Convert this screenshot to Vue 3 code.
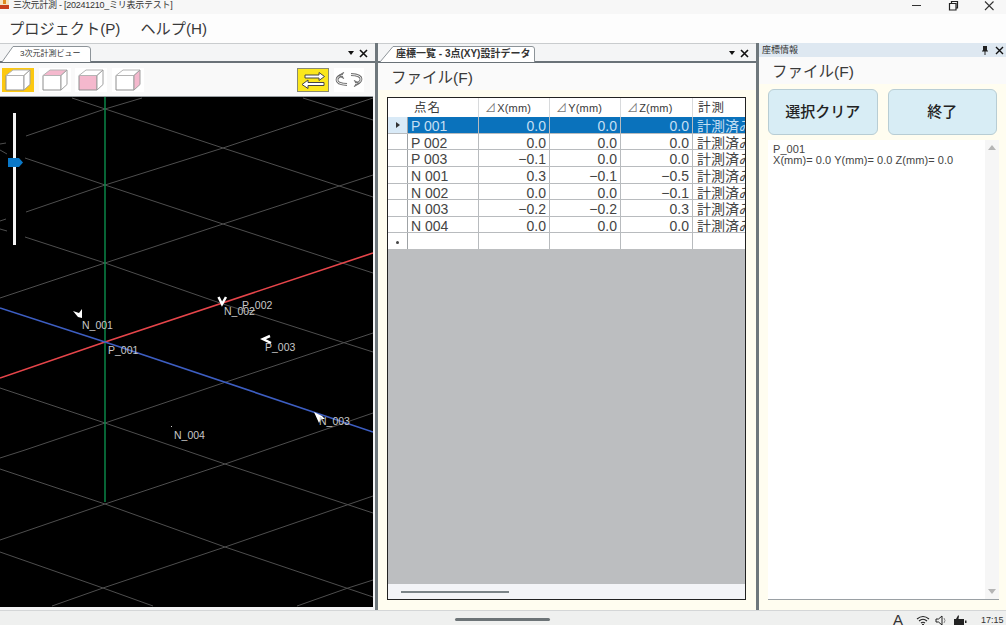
<script setup>
const rows = [
  { name: "P 001", x: "0.0", y: "0.0", z: "0.0", selected: true },
  { name: "P 002", x: "0.0", y: "0.0", z: "0.0" },
  { name: "P 003", x: "−0.1", y: "0.0", z: "0.0" },
  { name: "N 001", x: "0.3", y: "−0.1", z: "−0.5" },
  { name: "N 002", x: "0.0", y: "0.0", z: "−0.1" },
  { name: "N 003", x: "−0.2", y: "−0.2", z: "0.3" },
  { name: "N 004", x: "0.0", y: "0.0", z: "0.0" },
];

// grid lines of the 3D view, in canvas coordinates (top of canvas = 0)
const gridLines = [
  "72,1 223,51 373,100",
  "303,1 373,23",
  "0,53 7,57",
  "25,61 105,88 223,127 373,176",
  "0,132 7,134",
  "25,140 105,166 220,206 373,255",
  "0,291 105,326 225,367 373,416",
  "0,372 105,407 225,450 373,500",
  "0,455 103,491 153,509",
  "142,1 105,12 26,39",
  "0,47 6,46",
  "373,1 223,51 105,88 26,115",
  "0,124 6,122",
  "373,78 223,127 105,166 0,201",
  "373,236 223,286 105,326 25,353 0,361",
  "373,316 225,367 105,407 0,443",
  "373,399 225,450 103,491 52,509",
  "373,483 348,491 297,509",
];

const labels = [
  { text: "N_001", x: 82, y: 232 },
  { text: "P_002", x: 242, y: 212 },
  { text: "N_002", x: 224, y: 218 },
  { text: "P_001", x: 108, y: 257 },
  { text: "P_003", x: 265, y: 254 },
  { text: "N_003", x: 319, y: 328 },
  { text: "N_004", x: 174, y: 342 },
];

const cubes = ["active", "top", "front", "side"];
</script>

<template>
  <div class="app">
    <div class="titlebar">
      <svg class="app-icon" width="9" height="9" viewBox="0 0 9 9">
        <rect width="9" height="9" fill="#f4e3c4" />
        <rect y="5" width="9" height="4" fill="#c8401c" />
        <rect x="3" y="0" width="3" height="4" fill="#e08a1e" />
      </svg>
      <span class="title">三次元計測 - [20241210_ミリ表示テスト]</span>
      <div class="win-btns">
        <svg width="12" height="12" viewBox="0 0 12 12"><path d="M1 5.500H10" stroke="#333" fill="none" /></svg>
        <svg width="12" height="12" viewBox="0 0 12 12"><path d="M2.500 3.500H9V10H2.500ZM4.500 3V1.500H10.500V8H9.500" stroke="#222" fill="none" stroke-width="1.2" /></svg>
        <svg width="12" height="12" viewBox="0 0 12 12"><path d="M2 1.500L10.500 10M10.500 1.500L2 10" stroke="#333" fill="none" stroke-width="1.1" /></svg>
      </div>
    </div>
    <div class="menubar">
      <span>プロジェクト(P)</span>
      <span>ヘルプ(H)</span>
    </div>

    <div class="main">
      <section class="panel view-panel">
        <div class="tabstrip">
          <div class="tab">
            <svg class="tab-shape" viewBox="0 0 90 16" preserveAspectRatio="none">
              <path d="M0 16L11 .5H85Q88.500 .5 88.500 3V16" fill="#fff" stroke="#8d9499" />
            </svg>
            <span class="tab-text small">3次元計測ビュー</span>
          </div>
          <span class="tab-ctrl">
            <i class="caret"></i>
            <svg width="9" height="9" viewBox="0 0 9 9"><path d="M1 1L8 8M8 1L1 8" stroke="#111" stroke-width="1.6" /></svg>
          </span>
        </div>
        <div class="toolbar">
          <button v-for="c in cubes" :key="c" class="tool" :class="{ on: c === 'active' }">
            <svg width="32" height="24" viewBox="0 0 32 24">
              <path d="M4 7.500H22V22H4Z" :fill="c === 'front' ? '#f4b8cd' : '#fff'" stroke="#8e8e8e" />
              <path d="M4 7.500L11 2H28L22 7.500Z" :fill="c === 'top' ? '#f4b8cd' : '#fff'" stroke="#b4b4b4" />
              <path d="M22 7.500L28 2V16.500L22 22Z" :fill="c === 'side' ? '#f4b8cd' : '#fff'" stroke="#a0a0a0" />
            </svg>
          </button>
          <div class="spacer"></div>
          <button class="tool swap">
            <svg width="26" height="20" viewBox="0 0 26 20">
              <path d="M5 5H19V2.500L24.500 6.500L19 10.500V8H5Z" fill="#fff" stroke="#444" />
              <path d="M24 12.500H8V10L2 14.500L8 18.500V15.500H24Z" fill="#fff" stroke="#444" />
            </svg>
          </button>
          <button class="tool rotate">
            <svg width="28" height="15" viewBox="0 0 28 15">
              <g fill="none" stroke="#6f6f6f" stroke-width="2.800">
                <path d="M12 12.500Q2 12 2 8Q2 4 8 3.500" />
                <path d="M16 2.500Q26 3 26 7Q26 11 20 11.500" />
              </g>
              <g fill="none" stroke="#fff" stroke-width="0.900">
                <path d="M12 12.500Q2 12 2 8Q2 4 8 3.500" />
                <path d="M16 2.500Q26 3 26 7Q26 11 20 11.500" />
              </g>
              <path d="M9 .5L4 3.500L9 6.500M19 8.500L24 11.500L19 14.500" fill="none" stroke="#6f6f6f" stroke-width="1.200" />
            </svg>
          </button>
        </div>
        <div class="canvas">
          <svg class="scene" viewBox="0 0 373 510" width="373" height="510">
            <polyline v-for="(l, i) in gridLines" :key="i" :points="l" fill="none" stroke="#4e4e4e" stroke-width="1" />
            <path d="M105 0V405" stroke="#0b8f4d" stroke-width="1.400" fill="none" />
            <path d="M0 281L105 245L373 156" stroke="#e6454a" stroke-width="1.600" fill="none" />
            <path d="M0 211L105 245L373 335" stroke="#3d5ec2" stroke-width="1.600" fill="none" />
            <path d="M73 214L79 216L82 212L82 221L78 220Z" fill="#fff" />
            <path d="M218.500 200L222 207L226 200" fill="none" stroke="#fff" stroke-width="2.500" />
            <path d="M270 239L263 242L271 246" fill="none" stroke="#fff" stroke-width="2.500" />
            <path d="M314 315L322 319L325 322L321 322L319 326Z" fill="#fff" />
            <rect x="171" y="329" width="1" height="1" fill="#ccc" />
            <text v-for="t in labels" :key="t.text" :x="t.x" :y="t.y" class="pt-label">{{ t.text }}</text>
          </svg>
          <div class="slider">
            <div class="slider-bar"></div>
            <svg class="slider-thumb" width="15" height="9" viewBox="0 0 15 9">
              <path d="M0 0H11L15 4.500L11 9H0Z" fill="#0a78c8" />
            </svg>
          </div>
        </div>
      </section>

      <section class="panel list-panel">
        <div class="tabstrip">
          <div class="tab wide">
            <svg class="tab-shape" viewBox="0 0 155 16" preserveAspectRatio="none">
              <path d="M0 16L13 .5H152Q154.500 .5 154.500 3V16" fill="#fff" stroke="#8d9499" />
            </svg>
            <span class="tab-text bold">座標一覧 - 3点(XY)設計データ</span>
          </div>
          <span class="tab-ctrl">
            <i class="caret"></i>
            <svg width="9" height="9" viewBox="0 0 9 9"><path d="M1 1L8 8M8 1L1 8" stroke="#111" stroke-width="1.6" /></svg>
          </span>
        </div>
        <div class="filemenu">ファイル(F)</div>
        <div class="list-body">
          <div class="table">
            <div class="tr head">
              <div class="rh"></div>
              <div class="th jp">点名</div>
              <div class="th"><i class="delta">⊿</i>X(mm)</div>
              <div class="th"><i class="delta">⊿</i>Y(mm)</div>
              <div class="th"><i class="delta">⊿</i>Z(mm)</div>
              <div class="th jp last">計測</div>
            </div>
            <div v-for="r in rows" :key="r.name" class="tr" :class="{ sel: r.selected }">
              <div class="rh"><i v-if="r.selected" class="arrow"></i></div>
              <div class="td">{{ r.name }}</div>
              <div class="td num">{{ r.x }}</div>
              <div class="td num">{{ r.y }}</div>
              <div class="td num">{{ r.z }}</div>
              <div class="td clip">計測済み</div>
            </div>
            <div class="tr newrow">
              <div class="rh"><i class="star"></i></div>
              <div class="td"></div>
              <div class="td"></div>
              <div class="td"></div>
              <div class="td"></div>
              <div class="td"></div>
            </div>
            <div class="empty"></div>
            <div class="hscroll"><i></i></div>
          </div>
        </div>
      </section>

      <section class="panel info-panel">
        <div class="info-head">
          <span>座標情報</span>
          <span class="info-ctrl">
            <svg width="8" height="10" viewBox="0 0 8 10"><path d="M2 1H6V5.500H7V6.500H4.500V10H3.500V6.500H1V5.500H2Z" fill="#222" /></svg>
            <svg width="9" height="9" viewBox="0 0 9 9"><path d="M1 1L8 8M8 1L1 8" stroke="#111" stroke-width="1.4" /></svg>
          </span>
        </div>
        <div class="filemenu info-file">ファイル(F)</div>
        <div class="info-body">
          <div class="btns">
            <button class="big">選択クリア</button>
            <button class="big">終了</button>
          </div>
          <div class="memo">
            <div class="memo-text">P_001<br />X(mm)= 0.0 Y(mm)= 0.0 Z(mm)= 0.0</div>
            <div class="memo-scroll">
              <i class="up"></i>
              <i class="down"></i>
            </div>
          </div>
        </div>
      </section>
    </div>

    <div class="taskbar">
      <div class="home"></div>
      <div class="tray">
        <span class="ime">A</span>
        <svg width="14" height="11" viewBox="0 0 14 11">
          <path d="M1 4Q7 -1 13 4M3 6Q7 2.500 11 6M5 8Q7 6.500 9 8" fill="none" stroke="#222" stroke-width="1.100" />
          <circle cx="7" cy="9.800" r="1" fill="#222" />
        </svg>
        <svg width="13" height="11" viewBox="0 0 13 11">
          <path d="M1 4H3.500L7 1V10L3.500 7H1Z" fill="none" stroke="#222" />
          <path d="M9 3Q11 5.500 9 8" fill="none" stroke="#888" />
        </svg>
        <svg width="14" height="11" viewBox="0 0 14 11">
          <path d="M1 4H11V10H1Z" fill="#222" />
          <path d="M12 5.500H13.500V8H12Z" fill="#222" />
          <path d="M3 4L5 0.500H6L5.500 4Z" fill="#222" />
        </svg>
        <span class="clock">17:15</span>
      </div>
    </div>
  </div>
</template>

<style>
html,
body {
  margin: 0;
  overflow: hidden;
}
</style>

<style scoped>
.app {
  width: 1006px;
  height: 625px;
  display: flex;
  flex-direction: column;
  font-family: "Liberation Sans", "Noto Sans CJK JP", sans-serif;
  color: #333;
  background: #f0f0f0;
  overflow: hidden;
}
.titlebar {
  height: 14px;
  background: #f7f7f7;
  display: flex;
  align-items: flex-start;
  flex: none;
}
.app-icon {
  margin-top: 0;
}
.title {
  margin-left: 4px;
  font-size: 9px;
  line-height: 11px;
  letter-spacing: -0.25px;
  color: #333;
}
.win-btns {
  margin-left: auto;
  display: flex;
  gap: 24px;
  padding-right: 11px;
}
.menubar {
  height: 29px;
  background: #fdfdfd;
  flex: none;
  display: flex;
  align-items: center;
  gap: 20px;
  padding: 0 0 3px 9px;
  box-sizing: border-box;
  font-size: 15.200px;
  color: #3a3a3a;
}
.main {
  height: 567px;
  flex: none;
  display: flex;
  background: #6e777c;
}
.panel {
  display: flex;
  flex-direction: column;
}
.view-panel {
  width: 375px;
  background: #f4f5f6;
}
.list-panel {
  width: 378px;
  margin-left: 3px;
  background: #fdfdfd;
}
.info-panel {
  width: 247px;
  margin-left: 3px;
  background: #fdfdfd;
}
.tabstrip {
  height: 20px;
  flex: none;
  display: flex;
  align-items: flex-end;
  justify-content: space-between;
  background: #f4f5f6;
  border-top: 1px solid #c9ccce;
  border-bottom: 2px solid #6a7278;
  box-sizing: border-box;
  padding-left: 2px;
}
.tab {
  position: relative;
  width: 90px;
  height: 16px;
  margin-bottom: -1px;
}
.tab.wide {
  width: 155px;
}
.tab-shape {
  position: absolute;
  inset: 0;
  width: 100%;
  height: 100%;
}
.tab-text {
  position: relative;
  display: block;
  font-size: 8px;
  line-height: 15px;
  padding-left: 18px;
  white-space: nowrap;
}
.tab-text.bold {
  font-weight: 700;
  padding-left: 16px;
  font-size: 10px;
}
.tab-ctrl {
  display: flex;
  align-items: center;
  gap: 5px;
  height: 16px;
  padding-right: 7px;
}
.caret {
  width: 0;
  height: 0;
  border-left: 3.500px solid transparent;
  border-right: 3.500px solid transparent;
  border-top: 4px solid #111;
}
.toolbar {
  height: 33px;
  flex: none;
  display: flex;
  align-items: center;
  gap: 4.500px;
  padding: 0 11px 0 2px;
  box-sizing: border-box;
  background: #f9f9f9;
}
.tool {
  width: 32px;
  height: 24px;
  padding: 0;
  border: 0;
  background: #fff;
  display: flex;
  align-items: center;
  justify-content: center;
}
.tool.on {
  background: #fcc810;
}
.spacer {
  flex: 1;
}
.tool.swap {
  background: #fbe71c;
  border: 1px solid #8a8a70;
  box-sizing: border-box;
  margin-right: 1px;
}
.tool.rotate {
  width: 30px;
}
.canvas {
  position: relative;
  flex: none;
  width: 373px;
  height: 510px;
  background: #000;
  border-top: 1px solid #9aa0a4;
}
.scene {
  display: block;
}
.pt-label {
  font: 10.500px "Liberation Sans", sans-serif;
  fill: #c8c8c8;
}
.slider {
  position: absolute;
  left: 8px;
  top: 16px;
  width: 15px;
  height: 132px;
}
.slider-bar {
  position: absolute;
  left: 5px;
  top: 0;
  width: 3px;
  height: 100%;
  background: #f4f4f4;
}
.slider-thumb {
  position: absolute;
  left: 0;
  top: 45px;
}
.filemenu {
  height: 27px;
  flex: none;
  display: flex;
  align-items: center;
  padding: 0 0 2px 13px;
  font-size: 15.500px;
  color: #3a3a3a;
  background: #fafafa;
  box-sizing: border-box;
}
.list-body {
  flex: 1;
  background: #fffdf0;
  padding: 7px 10px 10px 9px;
  display: flex;
  min-height: 0;
}
.table {
  flex: 1;
  border: 1px solid #222;
  display: flex;
  flex-direction: column;
  background: #fff;
  min-width: 0;
}
.tr {
  display: grid;
  grid-template-columns: 20px 71px 71px 71px 72px 52px;
  height: 16.650px;
  flex: none;
  box-sizing: border-box;
  border-bottom: 1px solid #b8bbbe;
  font-size: 14px;
  line-height: 18.500px;
  color: #444;
}
.tr.head {
  height: 19px;
  font-size: 11px;
  line-height: 20px;
  border-bottom: 0;
}
.tr.sel .td {
  background: #0a72bc;
  color: #c4dff3;
}
.rh {
  background: #fff;
  display: flex;
  align-items: center;
  justify-content: center;
  border-right: 1px solid #9fa3a6;
}
.tr.sel .rh {
  background: #d9eaf7;
}
.head .rh {
  border-right: 0;
}
.star {
  width: 3px;
  height: 3px;
  margin-top: 3px;
  border-radius: 50%;
  background: #444;
}
.arrow {
  width: 0;
  height: 0;
  border-top: 3px solid transparent;
  border-bottom: 3px solid transparent;
  border-left: 4px solid #333;
}
.th {
  padding-left: 6px;
  border-right: 1px solid #d8dadc;
  white-space: nowrap;
  color: #3a3a3a;
  letter-spacing: 0.2px;
}
.th.jp {
  font-size: 12.500px;
  letter-spacing: 1px;
}
.th.last {
  padding-left: 5px;
  border-right: 0;
}
.delta {
  font-style: normal;
  color: #777;
  margin-right: 1px;
}
.td {
  padding: 0 3px;
  border-right: 1px solid #b8bbbe;
  white-space: nowrap;
  overflow: hidden;
}
.td:last-child {
  border-right: 0;
}
.num {
  text-align: right;
}
.clip {
  padding-left: 4px;
}
.tr.newrow {
  height: 16px;
  border-bottom: 0;
}
.empty {
  flex: 1;
  background: #bcbec0;
}
.hscroll {
  height: 15px;
  flex: none;
  background: #f3f4f7;
  position: relative;
}
.hscroll i {
  position: absolute;
  left: 13px;
  top: 7px;
  width: 108px;
  height: 2px;
  background: #7b8488;
}
.info-head {
  height: 14px;
  flex: none;
  background: #dee8f1;
  font-size: 9px;
  line-height: 15px;
  display: flex;
  justify-content: space-between;
  padding: 0 2px 0 3px;
}
.info-ctrl {
  display: flex;
  align-items: center;
  gap: 6px;
}
.info-body {
  flex: 1;
  background: #fffdf0;
  padding: 5px 7px 10px 9px;
  display: flex;
  flex-direction: column;
  gap: 5px;
  min-height: 0;
}
.btns {
  display: flex;
  gap: 10px;
  padding-right: 2px;
}
.big {
  flex: 1;
  height: 46px;
  border: 1px solid #b8cdd4;
  border-radius: 6px;
  background: #d8edf5;
  font-family: "Liberation Sans", "Noto Sans CJK JP", sans-serif;
  font-size: 15px;
  font-weight: 500;
  color: #222;
  padding: 0 0 4px;
}
.memo {
  flex: 1;
  display: flex;
  background: #fff;
  border-bottom: 1px solid #9aa0a4;
  min-height: 0;
}
.memo-text {
  flex: 1;
  font-size: 11px;
  line-height: 11px;
  padding: 4px 5px;
  letter-spacing: 0.05px;
  color: #444;
}
.memo-scroll {
  width: 14px;
  background: #f6f6f6;
  display: flex;
  flex-direction: column;
  justify-content: space-between;
  align-items: center;
  padding: 5px 0;
}
.up,
.down {
  width: 0;
  height: 0;
  border-left: 4px solid transparent;
  border-right: 4px solid transparent;
}
.up {
  border-bottom: 5px solid #b5b5b5;
}
.down {
  border-top: 5px solid #b5b5b5;
}
.taskbar {
  flex: 1;
  background: #eff0ef;
  display: flex;
  align-items: center;
  position: relative;
  border-top: 1px solid #d4d6d7;
}
.home {
  position: absolute;
  left: 455px;
  top: 7px;
  width: 95px;
  height: 3px;
  border-radius: 2px;
  background: #6d7477;
}
.tray {
  margin-left: auto;
  display: flex;
  align-items: center;
  gap: 5px;
  padding: 3px 3px 0 0;
}
.ime {
  font-size: 15px;
  line-height: 12px;
  margin-right: 8px;
  font-weight: 400;
}
.clock {
  font-size: 9px;
  margin-left: 9px;
  width: 22px;
  white-space: nowrap;
}
</style>
